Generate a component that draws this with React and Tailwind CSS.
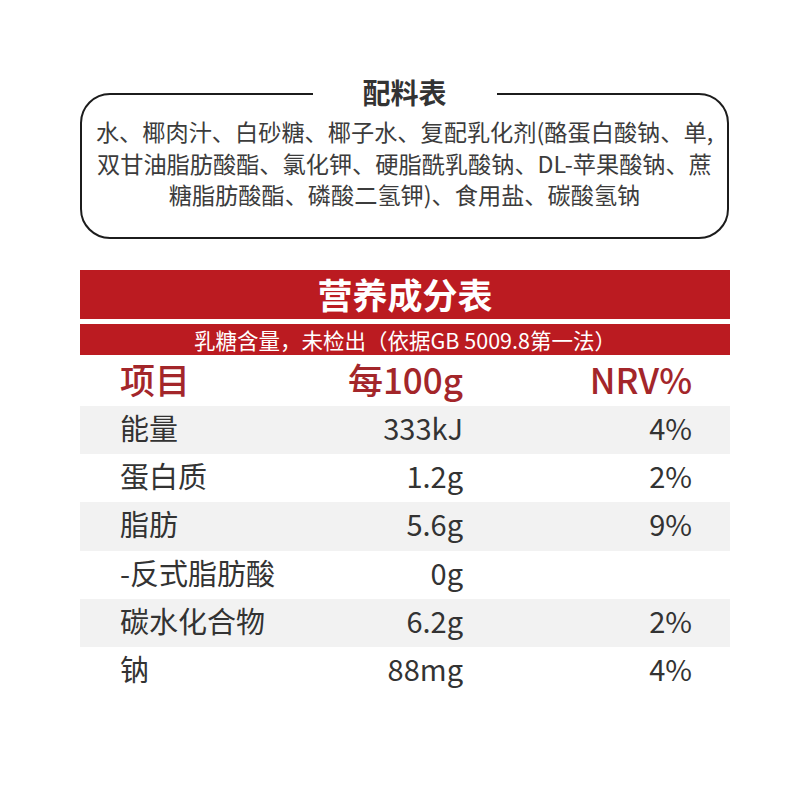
const rows = [
  { name: "能量", per: "333kJ", nrv: "4%" },
  { name: "蛋白质", per: "1.2g", nrv: "2%" },
  { name: "脂肪", per: "5.6g", nrv: "9%" },
  { name: "-反式脂肪酸", per: "0g", nrv: "" },
  { name: "碳水化合物", per: "6.2g", nrv: "2%" },
  { name: "钠", per: "88mg", nrv: "4%" },
];

const font = { fontFamily: '"Noto Sans CJK SC", "Noto Sans", sans-serif' };

export default function App() {
  return (
    <div className="w-[800px] h-[800px] bg-white pt-[93px]" style={font}>
      {/* 配料表 */}
      <div className="relative ml-[80px] w-[649px] h-[146px] border-2 border-[#1c1c1c] rounded-[30px] pt-[21px] text-center">
        <div className="absolute left-1/2 -translate-x-1/2 -top-[21px] bg-white px-[50px] text-[28px] leading-[36px] font-bold text-[#333]">
          配料表
        </div>
        <p className="px-[10px] text-[23.2px] leading-[31.5px] text-[#3c3c3c] whitespace-nowrap">
          水、椰肉汁、白砂糖、椰子水、复配乳化剂(酪蛋白酸钠、单,
          <br />
          双甘油脂肪酸酯、氯化钾、硬脂酰乳酸钠、DL-苹果酸钠、蔗
          <br />
          糖脂肪酸酯、磷酸二氢钾)、食用盐、碳酸氢钠
        </p>
      </div>

      {/* 营养成分表 */}
      <div className="ml-[80px] w-[650px] mt-[31px]">
        <div className="h-[49px] bg-[#bb1b21] flex items-center justify-center text-white text-[35px] leading-none font-bold pb-[2px]">
          营养成分表
        </div>
        <div className="mt-[5px] h-[31px] bg-[#bb1b21] flex items-center justify-center text-white text-[21.5px] leading-none">
          乳糖含量，未检出（依据GB 5009.8第一法）
        </div>
        <div className="h-[51px] flex items-center pl-[40px] pb-[5px] text-[35px] leading-none font-medium text-[#a3262a]">
          <div className="w-[200px]">项目</div>
          <div className="w-[143px] text-right">每100g</div>
          <div className="w-[229px] text-right">NRV%</div>
        </div>
        {rows.map((r, i) => (
          <div
            key={r.name}
            className={
              "h-[48.2px] flex items-center pl-[40px] pb-[5px] text-[29px] leading-none text-[#333] " +
              (i % 2 === 0 ? "bg-[#f2f2f2]" : "bg-white")
            }
          >
            <div className="w-[200px]">{r.name}</div>
            <div className="w-[143px] text-right">{r.per}</div>
            <div className="w-[229px] text-right">{r.nrv}</div>
          </div>
        ))}
      </div>
    </div>
  );
}
